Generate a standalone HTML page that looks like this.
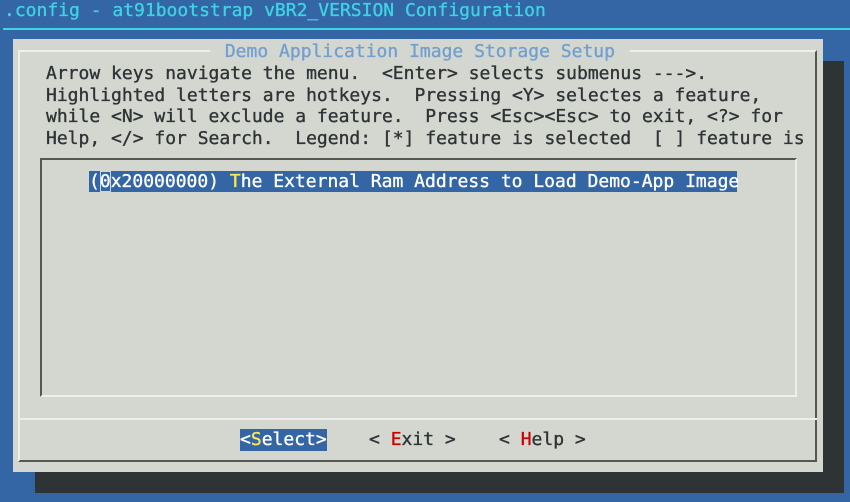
<!DOCTYPE html>
<html><head><meta charset="utf-8"><style>
*{margin:0;padding:0;box-sizing:border-box}
body{width:850px;height:502px;background:#3465a4;position:relative;overflow:hidden;font-family:"DejaVu Sans Mono","Liberation Mono",monospace;font-size:18px;color:#2e3436;-webkit-text-stroke:0.35px currentColor}
.a{position:absolute;white-space:pre;line-height:21.5px}
</style></head><body>
<div class="a" style="left:4px;top:0px;color:#3fd3e3">.config - at91bootstrap vBR2_VERSION Configuration</div>
<div class="a" style="left:3px;top:28px;width:847px;height:2px;background:#3fd3e3"></div>
<div class="a" style="left:35px;top:61px;width:809px;height:432px;background:#2e3436"></div>
<div class="a" style="left:13px;top:39px;width:810px;height:433px;background:#d3d7cf"></div>
<div class="a" style="left:18px;top:50px;width:799px;height:412px;border-top:2px solid #eeeeec;border-left:2px solid #eeeeec;border-right:2px solid #555753;border-bottom:2px solid #555753"></div>
<div class="a" style="left:19px;top:418px;width:798px;height:2px;background:#eeeeec"></div>
<div class="a" style="left:210px;top:41px;background:#d3d7cf;color:#729fcf;padding:0 4px"> Demo Application Image Storage Setup </div>
<div class="a" style="left:46px;top:63px">Arrow keys navigate the menu.  &lt;Enter&gt; selects submenus ---&gt;.
Highlighted letters are hotkeys.  Pressing &lt;Y&gt; selectes a feature,
while &lt;N&gt; will exclude a feature.  Press &lt;Esc&gt;&lt;Esc&gt; to exit, &lt;?&gt; for
Help, &lt;/&gt; for Search.  Legend: [*] feature is selected  [ ] feature is</div>
<div class="a" style="left:40px;top:158px;width:757px;height:239px;border-top:2px solid #555753;border-left:2px solid #555753;border-right:2px solid #eeeeec;border-bottom:2px solid #eeeeec"></div>
<div class="a" style="left:89px;top:171px;width:648px;height:21px;background:#3465a4;color:#fff;line-height:21px">(<span style="outline:1px solid #d3d7cf;outline-offset:-1px">0</span>x20000000) <span style="color:#fce94f">T</span>he External Ram Address to Load Demo-App Image</div>
<div class="a" style="left:240px;top:429px;width:87px;height:22px;background:#3465a4;color:#fff;line-height:22px">&lt;<span style="color:#fce94f">S</span>elect&gt;</div>
<div class="a" style="left:369px;top:429px;line-height:22px">&lt; <span style="color:#cc0000">E</span>xit &gt;</div>
<div class="a" style="left:499px;top:429px;line-height:22px">&lt; <span style="color:#cc0000">H</span>elp &gt;</div>
</body></html>
